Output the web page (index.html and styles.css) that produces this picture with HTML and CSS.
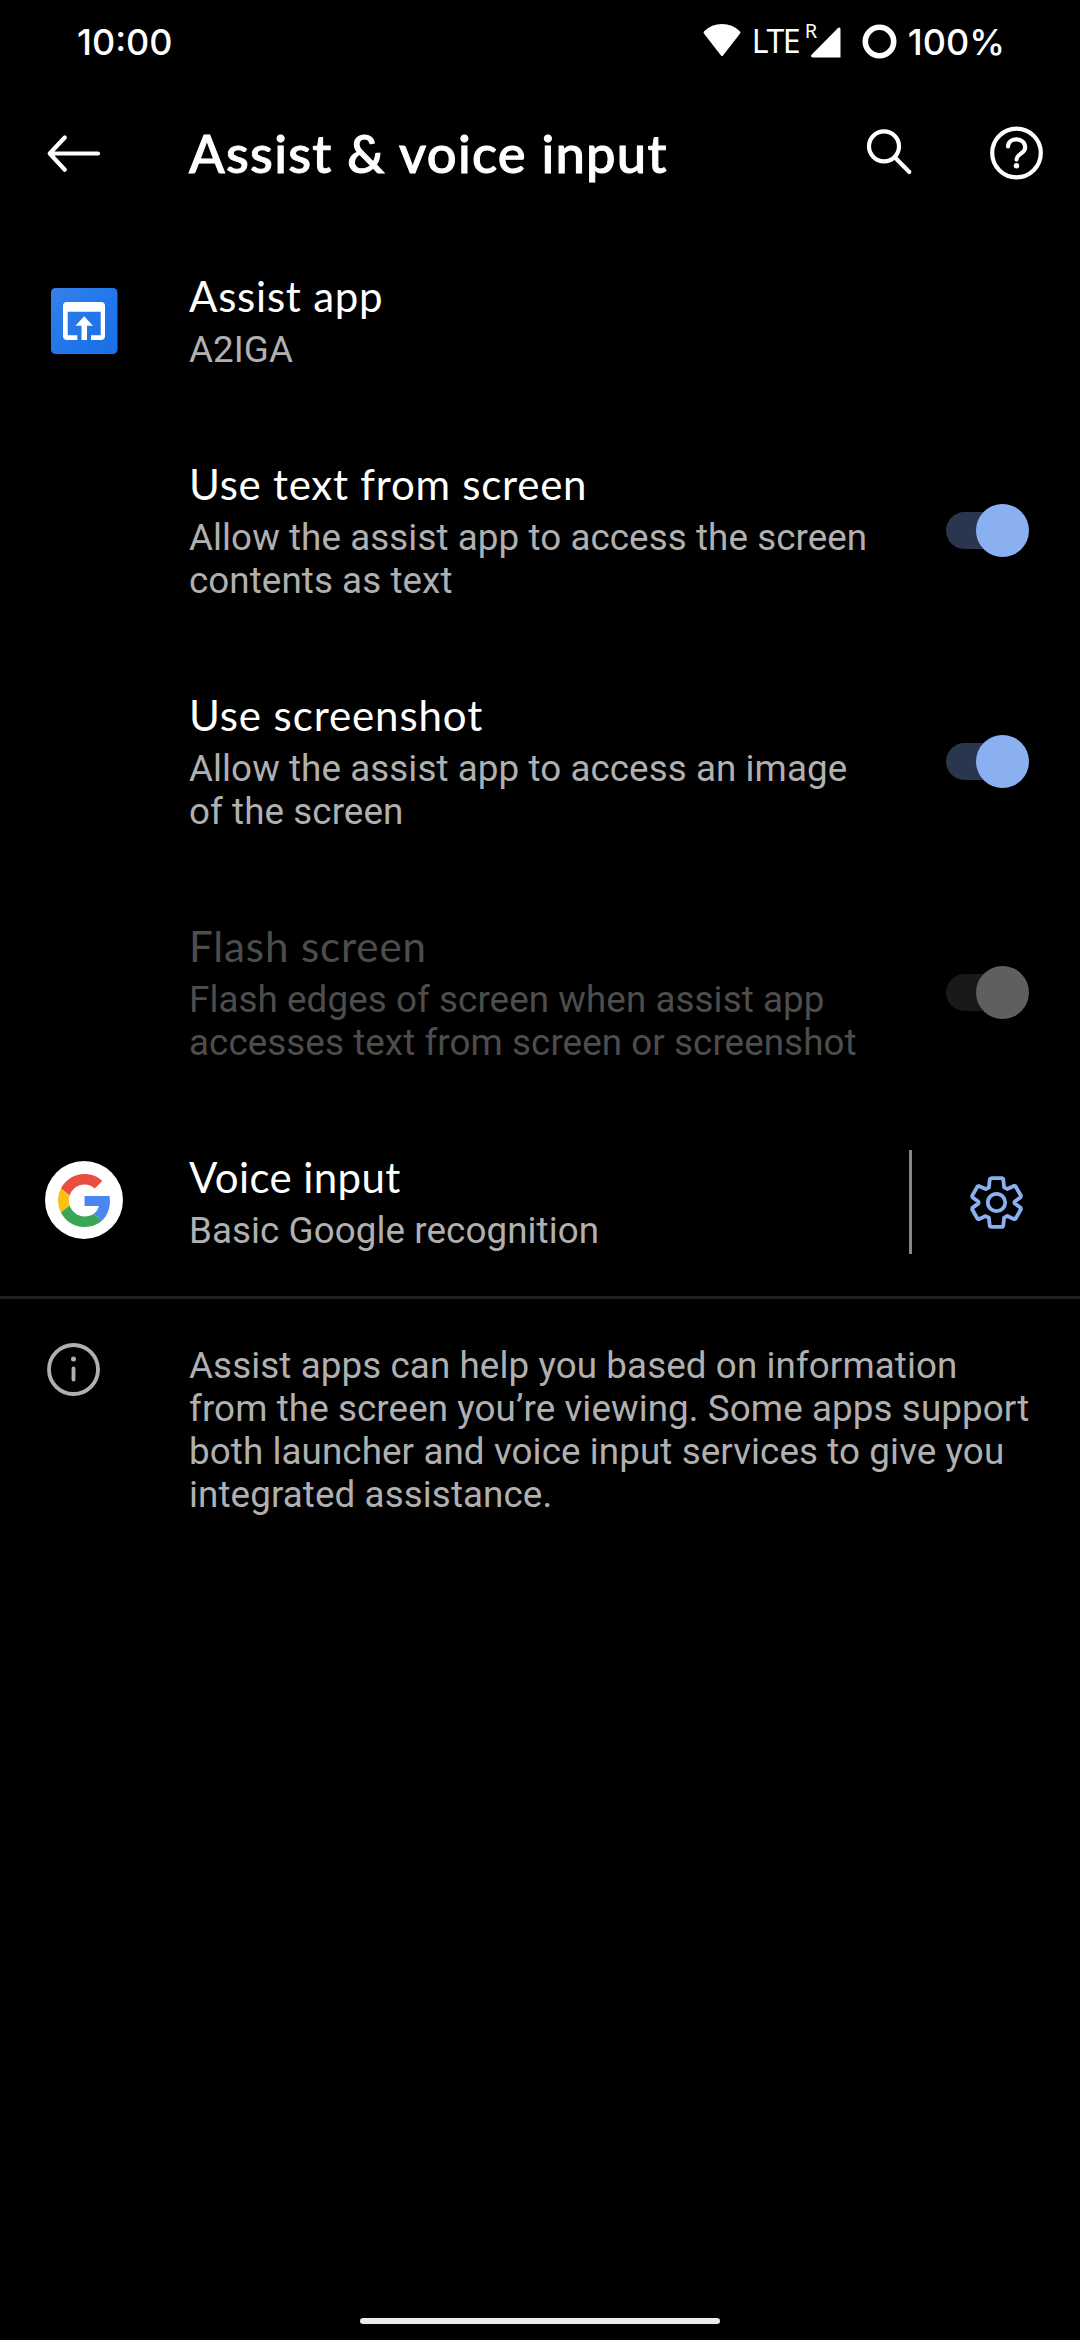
FILE: index.html
```html
<!DOCTYPE html>
<html lang="en">
<head>
<meta charset="utf-8">
<title>Assist &amp; voice input</title>
<link rel="stylesheet" href="styles.css">
</head>
<body>
<div class="status-bar">
  <span class="clock">10:00</span>
  <div class="status-icons">
    <svg class="wifi" viewBox="0 0 38 33"><path d="M1.2 7.2Q8.500 0 19 0t17.800 7.200q1.200 1.100.300 2.300L20 31.500q-1 1-2 0L.9 9.500q-.8-1.200.3-2.300z" fill="#fff"/></svg>
    <span class="network">LTE</span>
    <span class="signal">
      <svg viewBox="0 0 34 34"><path d="M4.500 33.500h28V5q-.5-2.500-2.700-.8L3.300 31q-1 1.800 1.200 2.500z" fill="#fff"/></svg>
      <span class="roaming">R</span>
    </span>
    <svg class="battery" viewBox="0 0 35 35"><circle cx="17.500" cy="17.500" r="14.200" fill="none" stroke="#fff" stroke-width="5.600"/></svg>
    <span class="percent">100%</span>
  </div>
</div>
<header class="app-bar">
  <svg class="icon" viewBox="0 0 63 63"><path d="M8 31.500h48M22.800 15.500 7.700 31.500l15.100 16.200" fill="none" stroke="#fff" stroke-width="4.200" stroke-linecap="round" stroke-linejoin="round"/></svg>
  <h1 class="page-title">Assist &amp; voice input</h1>
  <div class="actions">
    <svg class="icon" viewBox="0 0 63 63" fill="none" stroke="#fff" stroke-width="4.200" stroke-linecap="round"><circle cx="27" cy="24.300" r="15"/><path d="M38 35.500 52.300 50"/></svg>
    <svg class="icon" viewBox="-31.500 -31 63 63" fill="none" stroke="#fff" stroke-width="4.200" stroke-linecap="round"><circle r="24.300"/><path d="M-8.500-6.500C-8-16.200 8.700-16.200 8.700-5.200 8.700.5 0 .8 0 6.600"/><circle cy="12.800" r="2.700" fill="#fff" stroke="none"/></svg>
  </div>
</header>
<main class="settings">
  <section class="row">
    <div class="lead">
      <svg class="app-icon" viewBox="0 0 66.500 66">
        <defs><linearGradient id="blue" x1="0" y1="0" x2="1" y2="1"><stop offset="0" stop-color="#3581ea"/><stop offset=".55" stop-color="#2176ea"/><stop offset="1" stop-color="#1a6fe6"/></linearGradient></defs>
        <rect width="66.500" height="66" rx="4.500" fill="url(#blue)"/>
        <path d="M16 14h34q4 0 4 4v30q0 4-4 4H40v-4.700h9.700V23.700h-33v23.600h9.600V52H16q-4 0-4-4V18q0-4 4-4z" fill="#fff"/>
        <path d="m33.200 28.300 8.800 9.400h-6V52h-5.500V37.700h-6z" fill="#fff"/>
      </svg>
    </div>
    <div class="text"><h2 class="label">Assist app</h2><p class="summary">A2IGA</p></div>
  </section>
  <section class="row">
    <div class="lead"></div>
    <div class="text"><h2 class="label">Use text from screen</h2><p class="summary">Allow the assist app to access the screen<br>contents as text</p></div>
    <div class="switch"><i class="thumb"></i></div>
  </section>
  <section class="row">
    <div class="lead"></div>
    <div class="text"><h2 class="label wide">Use screenshot</h2><p class="summary">Allow the assist app to access an image<br>of the screen</p></div>
    <div class="switch"><i class="thumb"></i></div>
  </section>
  <section class="row disabled">
    <div class="lead"></div>
    <div class="text"><h2 class="label wide">Flash screen</h2><p class="summary">Flash edges of screen when assist app<br>accesses text from screen or screenshot</p></div>
    <div class="switch"><i class="thumb"></i></div>
  </section>
  <section class="row voice">
    <div class="lead">
      <span class="google">
        <svg viewBox="0 0 47 48"><path fill="#ea4e40" d="M24 9.500c3.540 0 6.710 1.220 9.210 3.600l6.850-6.850C35.900 2.380 30.470 0 24 0 14.620 0 6.510 5.380 2.560 13.220l7.980 6.190C12.430 13.720 17.740 9.500 24 9.500z"/><path fill="#4a87f3" d="M46.980 24.550c0-1.570-.15-3.090-.38-4.550H24v9.020h12.940c-.58 2.960-2.260 5.480-4.780 7.180l7.730 6c4.510-4.180 7.090-10.360 7.090-17.650z"/><path fill="#fbc016" d="M10.530 28.590c-.48-1.450-.76-2.990-.76-4.590s.27-3.140.76-4.590l-7.980-6.190C.92 16.460 0 20.120 0 24c0 3.880.92 7.540 2.560 10.780l7.970-6.190z"/><path fill="#3aa757" d="M24 48c6.480 0 11.930-2.130 15.890-5.810l-7.730-6c-2.150 1.450-4.920 2.300-8.160 2.300-6.260 0-11.570-4.220-13.470-9.910l-7.980 6.190C6.510 42.620 14.620 48 24 48z"/></svg>
      </span>
    </div>
    <div class="text"><h2 class="label tight">Voice input</h2><p class="summary">Basic Google recognition</p></div>
    <div class="gear">
      <svg class="icon" viewBox="-31.500 -31.500 63 63" fill="none" stroke="#8ab0f0" stroke-width="3.800" stroke-linejoin="round"><circle r="8.700"/><path d="M-5-24.300H5q1.600 0 1.800 1.600l.8 7.600 3.200 1.600 7-3.200 1.200.5 5.400 9.500-.3 1.400-6.100 4.500v1.600l6.100 4.500.3 1.400-5.400 9.500-1.200.5-7-3.200-3.200 1.600-.8 7.600Q6.600 24.400 5 24.400H-5q-1.600 0-1.800-1.600l-.8-7.600-3.200-1.600-7 3.200-1.200-.5-5.400-9.500.3-1.400 6.100-4.500v-1.600l-6.100-4.500-.3-1.400 5.400-9.500 1.200-.5 7 3.200 3.200-1.600.8-7.600q.2-1.600 1.800-1.600z"/></svg>
    </div>
  </section>
</main>
<footer class="note">
  <svg class="icon" viewBox="-31.500 -31.500 63 63" fill="none" stroke="#b0b0b0" stroke-width="3.800" stroke-linecap="round"><circle r="24.500"/><path d="M0-1V10"/><circle cy="-10.500" r="2.500" fill="#b0b0b0" stroke="none"/></svg>
  <p class="note-text">Assist apps can help you based on information<br>from the screen you’re viewing. Some apps support<br>both launcher and voice input services to give you<br>integrated assistance.</p>
</footer>
<div class="home-bar"></div>
</body>
</html>
```
FILE: styles.css
```css
* { box-sizing: border-box; margin: 0; padding: 0; }
body {
  width: 1080px;
  height: 2340px;
  display: flex;
  flex-direction: column;
  background: #000;
  color: #fff;
  font-family: Roboto, sans-serif;
  overflow: hidden;
}
svg { display: block; flex: none; }
h1, h2 { font-family: Lato, sans-serif; white-space: nowrap; }

.status-bar {
  height: 84px;
  padding: 0 75px 0 77px;
  display: flex;
  justify-content: space-between;
  font: 500 36px/84px Inter, sans-serif;
}
.status-icons { display: flex; }
.wifi { width: 38px; height: 33px; margin-top: 24px; }
.network {
  width: 56px;
  margin-left: 11px;
  font: 400 32px/82px "Noto Sans", sans-serif;
  letter-spacing: -1.5px;
}
.signal { position: relative; width: 34px; height: 34px; margin-top: 23.500px; }
.roaming {
  position: absolute;
  left: -3px;
  top: -7px;
  font: 400 20px/28px "Noto Sans", sans-serif;
}
.battery { width: 35px; height: 35px; margin: 23.500px 11px 0 20px; }

.app-bar {
  height: 141px;
  padding: 0 32px 3px 42px;
  display: flex;
  align-items: center;
}
.icon { width: 63px; height: 63px; }
.page-title {
  flex: 1;
  margin-left: 84px;
  font-size: 52.500px;
  line-height: 60px;
  font-weight: 500;
  letter-spacing: 1.250px;
  -webkit-text-stroke: 1px #fff;
}
.actions { display: flex; gap: 65px; }

.row { display: flex; align-items: center; padding: 42px 51px 42px 45px; }
.lead { width: 144px; flex: none; }
.text { flex: 1; }
.label { font-size: 42px; line-height: 58px; font-weight: 400; letter-spacing: .750px; }
.label.wide { letter-spacing: .900px; }
.label.tight { letter-spacing: .400px; }
.summary { margin-top: 3px; font-size: 36.750px; line-height: 43px; letter-spacing: .080px; color: #b0b0b0; white-space: nowrap; }
.app-icon { width: 66.500px; height: 66px; margin: 4px 0 0 6px; }

.switch {
  display: flex;
  justify-content: flex-end;
  align-items: center;
  width: 83px;
  height: 37px;
  margin-top: 4px;
  border-radius: 19px;
  background: linear-gradient(90deg, #2a364d 60px, transparent 60px);
}
.thumb { width: 53px; height: 53px; flex: none; border-radius: 50%; background: #8ab0f2; }
.disabled .label, .disabled .summary { color: #4d4d4d; }
.disabled .switch { background: linear-gradient(90deg, #191919 60px, transparent 60px); }
.disabled .thumb { background: #5f5f5f; }

.voice { padding-right: 0; padding-bottom: 44px; }
.voice .text { align-self: flex-start; }
.google {
  display: flex;
  align-items: center;
  justify-content: center;
  width: 78px;
  height: 78px;
  border-radius: 50%;
  background: #fff;
}
.google svg { width: 52px; height: 53px; }
.gear {
  width: 171px;
  height: 104px;
  margin: 2px 0 -2px;
  padding: 21px 0 0 53px;
  border-left: 3px solid #888;
}

.note { display: flex; border-top: 3px solid #212121; padding: 39px 0 0 42px; }
.note-text { margin: 6px 0 0 84px; font-size: 36.750px; line-height: 43px; letter-spacing: .100px; color: #b0b0b0; white-space: nowrap; }

.home-bar { width: 360px; height: 6px; margin: auto auto 16px; border-radius: 3px; background: #ebebeb; }
```
